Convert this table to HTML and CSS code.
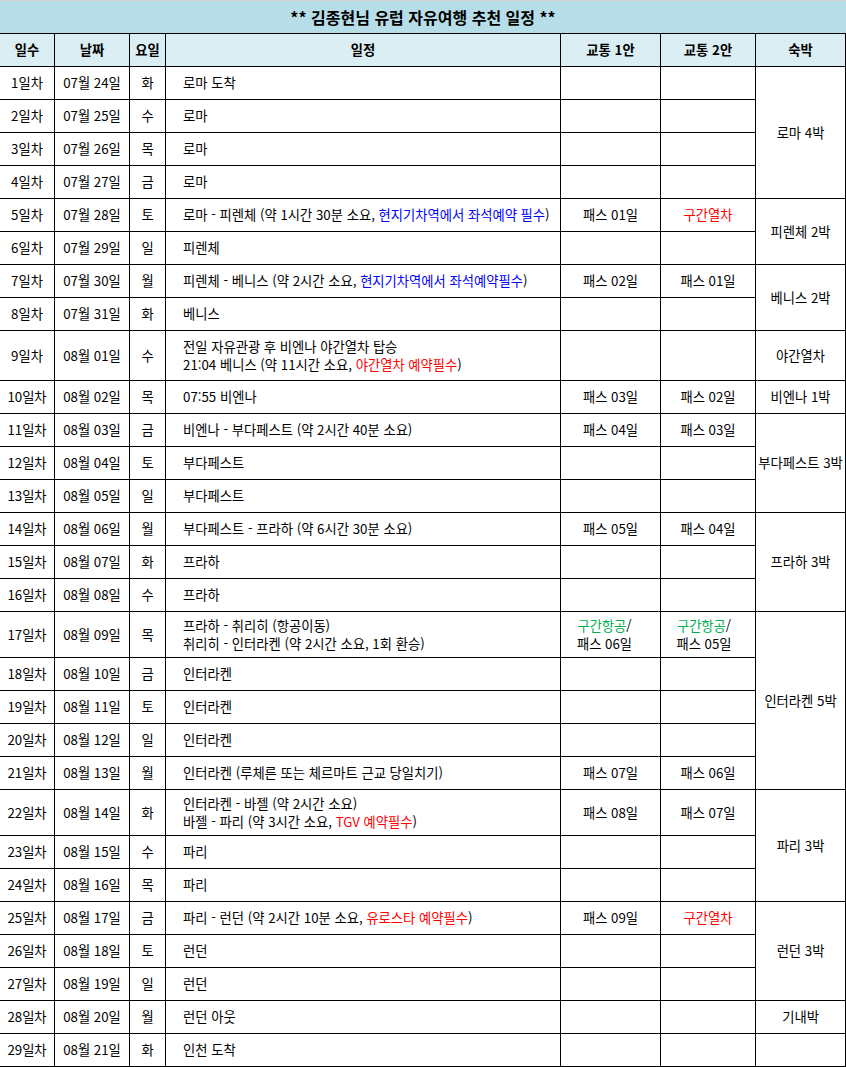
FILE: index.html
```html
<!DOCTYPE html>
<html lang="ko">
<head>
<meta charset="utf-8">
<title>김종현님 유럽 자유여행 추천 일정</title>
<link rel="stylesheet" href="styles.css">
</head>
<body>
<div class="sheet">
<table class="plan">
  <colgroup>
    <col class="c-day"><col class="c-date"><col class="c-wd"><col class="c-plan"><col class="c-t1"><col class="c-t2"><col class="c-stay">
  </colgroup>
  <thead>
    <tr class="title-row"><th colspan="7" class="title">** 김종현님 유럽 자유여행 추천 일정 **</th></tr>
    <tr class="head-row">
      <th>일수</th><th>날짜</th><th>요일</th><th>일정</th><th>교통 1안</th><th>교통 2안</th><th>숙박</th>
    </tr>
  </thead>
  <tbody>
    <tr><td>1일차</td><td>07월 24일</td><td>화</td><td class="plan-cell">로마 도착</td><td></td><td></td><td rowspan="4">로마 4박</td></tr>
    <tr><td>2일차</td><td>07월 25일</td><td>수</td><td class="plan-cell">로마</td><td></td><td></td></tr>
    <tr><td>3일차</td><td>07월 26일</td><td>목</td><td class="plan-cell">로마</td><td></td><td></td></tr>
    <tr><td>4일차</td><td>07월 27일</td><td>금</td><td class="plan-cell">로마</td><td></td><td></td></tr>
    <tr><td>5일차</td><td>07월 28일</td><td>토</td><td class="plan-cell">로마 - 피렌체 (약 1시간 30분 소요, <span class="blue">현지기차역에서 좌석예약 필수</span>)</td><td>패스 01일</td><td><span class="red">구간열차</span></td><td rowspan="2">피렌체 2박</td></tr>
    <tr><td>6일차</td><td>07월 29일</td><td>일</td><td class="plan-cell">피렌체</td><td></td><td></td></tr>
    <tr><td>7일차</td><td>07월 30일</td><td>월</td><td class="plan-cell">피렌체 - 베니스 (약 2시간 소요, <span class="blue">현지기차역에서 좌석예약필수</span>)</td><td>패스 02일</td><td>패스 01일</td><td rowspan="2">베니스 2박</td></tr>
    <tr><td>8일차</td><td>07월 31일</td><td>화</td><td class="plan-cell">베니스</td><td></td><td></td></tr>
    <tr class="tall50"><td>9일차</td><td>08월 01일</td><td>수</td><td class="plan-cell">전일 자유관광 후 비엔나 야간열차 탑승<br>21:04 베니스 (약 11시간 소요, <span class="red">야간열차 예약필수</span>)</td><td></td><td></td><td>야간열차</td></tr>
    <tr><td>10일차</td><td>08월 02일</td><td>목</td><td class="plan-cell">07:55 비엔나</td><td>패스 03일</td><td>패스 02일</td><td>비엔나 1박</td></tr>
    <tr><td>11일차</td><td>08월 03일</td><td>금</td><td class="plan-cell">비엔나 - 부다페스트 (약 2시간 40분 소요)</td><td>패스 04일</td><td>패스 03일</td><td rowspan="3">부다페스트 3박</td></tr>
    <tr><td>12일차</td><td>08월 04일</td><td>토</td><td class="plan-cell">부다페스트</td><td></td><td></td></tr>
    <tr><td>13일차</td><td>08월 05일</td><td>일</td><td class="plan-cell">부다페스트</td><td></td><td></td></tr>
    <tr><td>14일차</td><td>08월 06일</td><td>월</td><td class="plan-cell">부다페스트 - 프라하 (약 6시간 30분 소요)</td><td>패스 05일</td><td>패스 04일</td><td rowspan="3">프라하 3박</td></tr>
    <tr><td>15일차</td><td>08월 07일</td><td>화</td><td class="plan-cell">프라하</td><td></td><td></td></tr>
    <tr><td>16일차</td><td>08월 08일</td><td>수</td><td class="plan-cell">프라하</td><td></td><td></td></tr>
    <tr class="tall46"><td>17일차</td><td>08월 09일</td><td>목</td><td class="plan-cell">프라하 - 취리히 (항공이동)<br>취리히 - 인터라켄 (약 2시간 소요, 1회 환승)</td><td class="two-line t1"><span class="green">구간항공</span>/<br>패스 06일</td><td class="two-line t2"><span class="green">구간항공</span>/<br>패스 05일</td><td rowspan="5">인터라켄 5박</td></tr>
    <tr><td>18일차</td><td>08월 10일</td><td>금</td><td class="plan-cell">인터라켄</td><td></td><td></td></tr>
    <tr><td>19일차</td><td>08월 11일</td><td>토</td><td class="plan-cell">인터라켄</td><td></td><td></td></tr>
    <tr><td>20일차</td><td>08월 12일</td><td>일</td><td class="plan-cell">인터라켄</td><td></td><td></td></tr>
    <tr><td>21일차</td><td>08월 13일</td><td>월</td><td class="plan-cell">인터라켄 (루체른 또는 체르마트 근교 당일치기)</td><td>패스 07일</td><td>패스 06일</td></tr>
    <tr class="tall46"><td>22일차</td><td>08월 14일</td><td>화</td><td class="plan-cell">인터라켄 - 바젤 (약 2시간 소요)<br>바젤 - 파리 (약 3시간 소요, <span class="red">TGV 예약필수</span>)</td><td>패스 08일</td><td>패스 07일</td><td rowspan="3">파리 3박</td></tr>
    <tr><td>23일차</td><td>08월 15일</td><td>수</td><td class="plan-cell">파리</td><td></td><td></td></tr>
    <tr><td>24일차</td><td>08월 16일</td><td>목</td><td class="plan-cell">파리</td><td></td><td></td></tr>
    <tr><td>25일차</td><td>08월 17일</td><td>금</td><td class="plan-cell">파리 - 런던 (약 2시간 10분 소요, <span class="red">유로스타 예약필수</span>)</td><td>패스 09일</td><td><span class="red">구간열차</span></td><td rowspan="3">런던 3박</td></tr>
    <tr><td>26일차</td><td>08월 18일</td><td>토</td><td class="plan-cell">런던</td><td></td><td></td></tr>
    <tr><td>27일차</td><td>08월 19일</td><td>일</td><td class="plan-cell">런던</td><td></td><td></td></tr>
    <tr><td>28일차</td><td>08월 20일</td><td>월</td><td class="plan-cell">런던 아웃</td><td></td><td></td><td>기내박</td></tr>
    <tr><td>29일차</td><td>08월 21일</td><td>화</td><td class="plan-cell">인천 도착</td><td></td><td></td><td></td></tr>
  </tbody>
</table>
</div>
</body>
</html>
```
FILE: styles.css
```css
html, body {
  margin: 0;
  padding: 0;
  background: #ffffff;
}

body {
  font-family: "Noto Sans CJK KR", "Noto Sans", "Liberation Sans", sans-serif;
  font-size: 13.3px;
  color: #000000;
}

.sheet {
  border-top: 1px solid #d4d4d4;
  width: 846px;
}

.plan {
  width: 846px;
  table-layout: fixed;
  border-collapse: separate;
  border-spacing: 0;
}

.c-day { width: 55px; }
.c-date { width: 75px; }
.c-wd { width: 36px; }
.c-plan { width: 395px; }
.c-t1 { width: 100px; }
.c-t2 { width: 95px; }
.c-stay { width: 90px; }

.plan th,
.plan td {
  box-sizing: border-box;
  padding: 0;
  border-right: 1px solid #000000;
  border-bottom: 1px solid #000000;
  text-align: center;
  vertical-align: middle;
  line-height: 18px;
  white-space: nowrap;
  overflow: hidden;
}

.plan tr { height: 33px; }
.plan tr.tall50 { height: 50px; }
.plan tr.tall46 { height: 46px; }

.plan th.title {
  background: #b7dde8;
  border-right: none;
  font-size: 16px;
  font-weight: bold;
}

.head-row th {
  background: #daeef3;
  font-weight: bold;
}

.plan td.plan-cell {
  text-align: left;
  padding-left: 17px;
}

.plan td.two-line.t1 { padding-right: 12px; }
.plan td.two-line.t2 { padding-right: 8px; }

.blue { color: #0000ff; }
.red { color: #ff0000; }
.green { color: #00b050; }
```
